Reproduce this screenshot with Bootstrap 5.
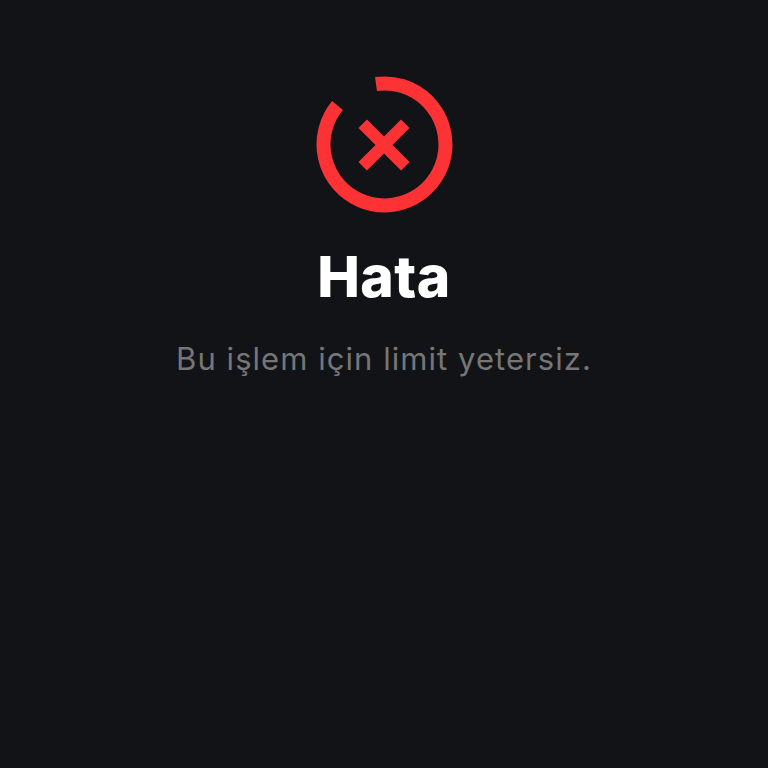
<!DOCTYPE html>
<html lang="tr">
<head>
  <meta charset="UTF-8" />
  <meta name="viewport" content="width=device-width, initial-scale=1.0"/>
  <title>Hata</title>
  <link href="https://cdn.jsdelivr.net/npm/bootstrap@5.3.0/dist/css/bootstrap.min.css" rel="stylesheet">
  <style>
    body { background-color: #121317; font-family: "Inter", "Liberation Sans", sans-serif; }
    .error-wrap { padding-top: 76px; }
    .error-icon { width: 138px; height: 138px; display: block; }
    .error-title { font-size: 57px; font-weight: 800; line-height: 68px; letter-spacing: .4px; color: #fff; margin-top: 29px; margin-bottom: 0; }
    .error-text { font-size: 31px; font-weight: 400; line-height: 40px; letter-spacing: 1.05px; color: #767676; margin-top: 28px; margin-bottom: 0; }
  </style>
</head>
<body>
  <div class="error-wrap d-flex flex-column align-items-center text-center">
    <svg class="error-icon" viewBox="0 0 138 138" fill="none" stroke="#fd3235">
      <!-- open ring, gap at upper left -->
      <path d="M61 8A61 61 0 1 1 22.5 29.5" stroke-width="14"/>
      <path d="M47.7 47.7L90.3 90.3M90.3 47.7L47.7 90.3" stroke-width="12"/>
    </svg>
    <h1 class="error-title">Hata</h1>
    <p class="error-text">Bu işlem için limit yetersiz.</p>
  </div>
</body>
</html>
